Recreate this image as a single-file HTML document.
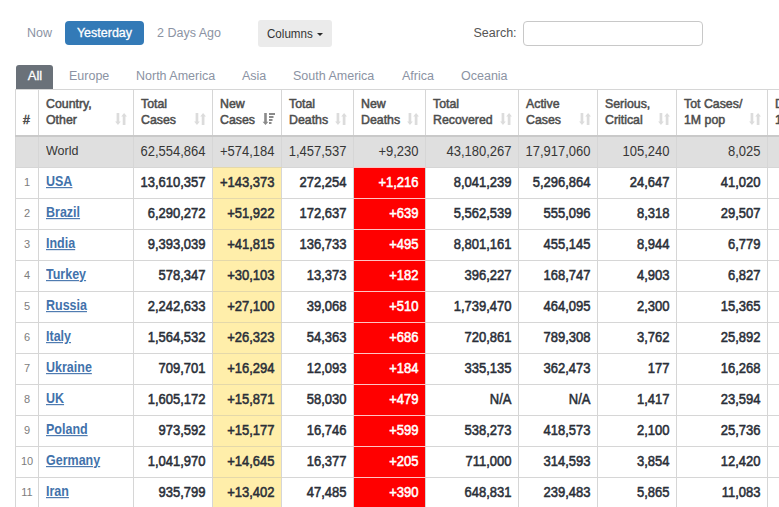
<!DOCTYPE html>
<html><head><meta charset="utf-8">
<style>
html,body{margin:0;padding:0;background:#fff;width:779px;height:507px;overflow:hidden;font-family:"Liberation Sans",sans-serif;}
.abs{position:absolute;white-space:nowrap;}
.nav{font-size:12.5px;color:#8b93a3;line-height:15px;}
.btn-y{left:65px;top:21px;width:79px;height:24px;background:#337ab7;border-radius:4px;color:#fff;font-size:12.5px;line-height:24px;text-align:center;-webkit-text-stroke:0.3px #fff;}
.cols{left:258px;top:20px;width:74px;height:27px;background:#ebebeb;border-radius:3px;}
.cols span{position:absolute;left:9px;top:6px;font-size:11.6px;line-height:15px;color:#333;transform:scaleY(1.1);transform-origin:0 80%;}
.caret{position:absolute;left:58.5px;top:12.7px;width:0;height:0;border-left:3.5px solid transparent;border-right:3.5px solid transparent;border-top:3.5px solid #2a2a2a;}
.search-l{left:473.5px;top:26px;font-size:12.5px;color:#555;line-height:15px;}
.search-i{left:523px;top:21px;width:180px;height:25px;border:1px solid #c8c8c8;border-radius:4px;box-sizing:border-box;}
.tab{top:65px;height:24px;font-size:12.5px;line-height:22px;color:#8b93a3;}
.tab-all{left:16px;width:37px;background:#6a7179;color:#fff;border-radius:3px 3px 0 0;text-align:center;font-size:13px;-webkit-text-stroke:0.3px #fff;text-indent:1px;}
table{position:absolute;left:15px;top:89px;width:812px;border-collapse:collapse;table-layout:fixed;font-size:13px;}
td,th{border:1px solid #d6d6d6;white-space:nowrap;overflow:hidden;}
th{height:38px;font-size:12.35px;font-weight:normal;color:#4d4d4d;-webkit-text-stroke:0.5px #4d4d4d;text-align:left;vertical-align:bottom;line-height:16px;padding:0 7px 7px 7px;border-bottom:2px solid #c9c9c9;}
td{height:28px;text-align:right;font-weight:normal;color:#2a2f38;padding:0 6.5px 2px 4px;-webkit-text-stroke:0.5px #2a2f38;}
.v{display:inline-block;transform:scaleY(1.08);transform-origin:0 75%;}
tr.world td{background:#dfdfdf;font-weight:normal;color:#363636;-webkit-text-stroke:0;}
td.num{font-size:11px;color:#7d7d7d;font-weight:normal;text-align:center;padding:0 0 2px 0;-webkit-text-stroke:0;}
td.c{text-align:left;padding-left:7px;font-size:12.5px;}
td.c a{display:inline-block;transform:scaleY(1.1);transform-origin:0 80%;color:#4272ab;text-decoration:underline;font-weight:bold;-webkit-text-stroke:0;}
td.nd{-webkit-text-stroke:0.5px #fff;}
td.nc{background:#ffeeaa;border-top-color:#e4d8aa;border-bottom-color:#e4d8aa;}
td.nd{background:#ff0000;color:#fff;border-top-color:#ffc4c4;border-bottom-color:#ffc4c4;}
tr.world td.nc,tr.world td.nd{background:#dfdfdf;color:#363636;}
.s{position:absolute;top:113px;width:12px;height:12px;}
</style></head><body>
<div class="abs nav" style="left:27px;top:26px;">Now</div>
<div class="abs btn-y">Yesterday</div>
<div class="abs nav" style="left:157px;top:26px;">2 Days Ago</div>
<div class="abs cols"><span>Columns</span><div class="caret"></div></div>
<div class="abs search-l">Search:</div>
<div class="abs search-i"></div>
<div class="abs tab tab-all">All</div>
<div class="abs tab" style="left:69px;">Europe</div>
<div class="abs tab" style="left:136px;">North America</div>
<div class="abs tab" style="left:242px;">Asia</div>
<div class="abs tab" style="left:293px;">South America</div>
<div class="abs tab" style="left:402px;">Africa</div>
<div class="abs tab" style="left:461px;">Oceania</div>

<table>
<colgroup><col style="width:23px"><col style="width:95px"><col style="width:79px"><col style="width:69px"><col style="width:72px"><col style="width:72px"><col style="width:93px"><col style="width:79px"><col style="width:79px"><col style="width:91px"><col style="width:60px"></colgroup>
<tr><th class="hn">#</th><th>Country,<br>Other</th><th>Total<br>Cases</th><th>New<br>Cases</th><th>Total<br>Deaths</th><th>New<br>Deaths</th><th>Total<br>Recovered</th><th>Active<br>Cases</th><th>Serious,<br>Critical</th><th>Tot&nbsp;Cases/<br>1M pop</th><th>Deaths/<br>1M pop</th></tr>
<tr class="world"><td class="num"></td><td class="c"><span class="v">World</span></td><td><span class="v">62,554,864</span></td><td class="nc"><span class="v">+574,184</span></td><td><span class="v">1,457,537</span></td><td class="nd"><span class="v">+9,230</span></td><td><span class="v">43,180,267</span></td><td><span class="v">17,917,060</span></td><td><span class="v">105,240</span></td><td><span class="v">8,025</span></td><td><span class="v">187</span></td></tr>
<tr><td class="num">1</td><td class="c"><a>USA</a></td><td><span class="v">13,610,357</span></td><td class="nc"><span class="v">+143,373</span></td><td><span class="v">272,254</span></td><td class="nd"><span class="v">+1,216</span></td><td><span class="v">8,041,239</span></td><td><span class="v">5,296,864</span></td><td><span class="v">24,647</span></td><td><span class="v">41,020</span></td><td><span class="v">820</span></td></tr>
<tr><td class="num">2</td><td class="c"><a>Brazil</a></td><td><span class="v">6,290,272</span></td><td class="nc"><span class="v">+51,922</span></td><td><span class="v">172,637</span></td><td class="nd"><span class="v">+639</span></td><td><span class="v">5,562,539</span></td><td><span class="v">555,096</span></td><td><span class="v">8,318</span></td><td><span class="v">29,507</span></td><td><span class="v">810</span></td></tr>
<tr><td class="num">3</td><td class="c"><a>India</a></td><td><span class="v">9,393,039</span></td><td class="nc"><span class="v">+41,815</span></td><td><span class="v">136,733</span></td><td class="nd"><span class="v">+495</span></td><td><span class="v">8,801,161</span></td><td><span class="v">455,145</span></td><td><span class="v">8,944</span></td><td><span class="v">6,779</span></td><td><span class="v">99</span></td></tr>
<tr><td class="num">4</td><td class="c"><a>Turkey</a></td><td><span class="v">578,347</span></td><td class="nc"><span class="v">+30,103</span></td><td><span class="v">13,373</span></td><td class="nd"><span class="v">+182</span></td><td><span class="v">396,227</span></td><td><span class="v">168,747</span></td><td><span class="v">4,903</span></td><td><span class="v">6,827</span></td><td><span class="v">158</span></td></tr>
<tr><td class="num">5</td><td class="c"><a>Russia</a></td><td><span class="v">2,242,633</span></td><td class="nc"><span class="v">+27,100</span></td><td><span class="v">39,068</span></td><td class="nd"><span class="v">+510</span></td><td><span class="v">1,739,470</span></td><td><span class="v">464,095</span></td><td><span class="v">2,300</span></td><td><span class="v">15,365</span></td><td><span class="v">268</span></td></tr>
<tr><td class="num">6</td><td class="c"><a>Italy</a></td><td><span class="v">1,564,532</span></td><td class="nc"><span class="v">+26,323</span></td><td><span class="v">54,363</span></td><td class="nd"><span class="v">+686</span></td><td><span class="v">720,861</span></td><td><span class="v">789,308</span></td><td><span class="v">3,762</span></td><td><span class="v">25,892</span></td><td><span class="v">900</span></td></tr>
<tr><td class="num">7</td><td class="c"><a>Ukraine</a></td><td><span class="v">709,701</span></td><td class="nc"><span class="v">+16,294</span></td><td><span class="v">12,093</span></td><td class="nd"><span class="v">+184</span></td><td><span class="v">335,135</span></td><td><span class="v">362,473</span></td><td><span class="v">177</span></td><td><span class="v">16,268</span></td><td><span class="v">277</span></td></tr>
<tr><td class="num">8</td><td class="c"><a>UK</a></td><td><span class="v">1,605,172</span></td><td class="nc"><span class="v">+15,871</span></td><td><span class="v">58,030</span></td><td class="nd"><span class="v">+479</span></td><td><span class="v">N/A</span></td><td><span class="v">N/A</span></td><td><span class="v">1,417</span></td><td><span class="v">23,594</span></td><td><span class="v">853</span></td></tr>
<tr><td class="num">9</td><td class="c"><a>Poland</a></td><td><span class="v">973,592</span></td><td class="nc"><span class="v">+15,177</span></td><td><span class="v">16,746</span></td><td class="nd"><span class="v">+599</span></td><td><span class="v">538,273</span></td><td><span class="v">418,573</span></td><td><span class="v">2,100</span></td><td><span class="v">25,736</span></td><td><span class="v">442</span></td></tr>
<tr><td class="num">10</td><td class="c"><a>Germany</a></td><td><span class="v">1,041,970</span></td><td class="nc"><span class="v">+14,645</span></td><td><span class="v">16,377</span></td><td class="nd"><span class="v">+205</span></td><td><span class="v">711,000</span></td><td><span class="v">314,593</span></td><td><span class="v">3,854</span></td><td><span class="v">12,420</span></td><td><span class="v">195</span></td></tr>
<tr><td class="num">11</td><td class="c"><a>Iran</a></td><td><span class="v">935,799</span></td><td class="nc"><span class="v">+13,402</span></td><td><span class="v">47,485</span></td><td class="nd"><span class="v">+390</span></td><td><span class="v">648,831</span></td><td><span class="v">239,483</span></td><td><span class="v">5,865</span></td><td><span class="v">11,083</span></td><td><span class="v">563</span></td></tr>
</table>
<svg width="0" height="0" style="position:absolute">
<defs>
<g id="si"><path d="M1.6 0h2.7v8.6h1.5L2.95 12L0.1 8.6h1.5z M7.75 12h2.7V3.4h1.5L9.1 0L6.25 3.4h1.5z" fill="#dcdcdc"/></g>
<g id="sa"><path d="M2.2 0h2.6v8.8h1.6L3.5 12L0.6 8.8h1.6z" fill="#8a8a8a"/><path d="M7 0h6v2h-6zM7 3h4.5v2h-4.5zM7 6h3.5v2h-3.5zM7 9h2.5v2h-2.5z" fill="#8a8a8a"/></g>
</defs></svg>
<svg class="s" style="left:114.5px" viewBox="0 0 12 12"><use href="#si"/></svg>
<svg class="s" style="left:193.5px" viewBox="0 0 12 12"><use href="#si"/></svg>
<svg class="s" style="left:262px;width:13px;" viewBox="0 0 13 12"><use href="#sa"/></svg>
<svg class="s" style="left:334.5px" viewBox="0 0 12 12"><use href="#si"/></svg>
<svg class="s" style="left:406.5px" viewBox="0 0 12 12"><use href="#si"/></svg>
<svg class="s" style="left:499.5px" viewBox="0 0 12 12"><use href="#si"/></svg>
<svg class="s" style="left:578.5px" viewBox="0 0 12 12"><use href="#si"/></svg>
<svg class="s" style="left:657.5px" viewBox="0 0 12 12"><use href="#si"/></svg>
<svg class="s" style="left:748.5px" viewBox="0 0 12 12"><use href="#si"/></svg>
</body></html>
